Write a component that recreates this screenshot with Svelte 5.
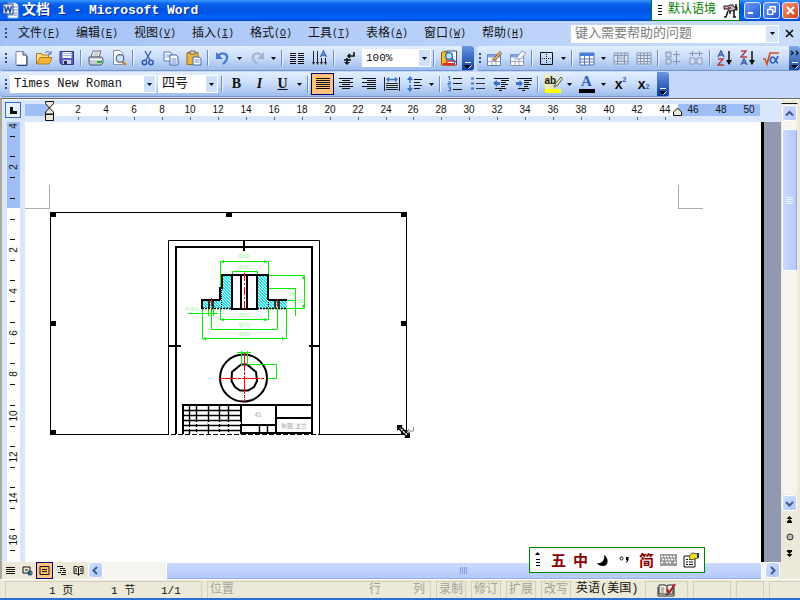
<script>
  const icons = {
    blank: '<path d="M3 1.500h7l3.500 3.500v10H3z" fill="#fff" stroke="#6f86ad"/><path d="M10 1.500V5h3.500M4 15.500h10V6" fill="none" stroke="#33415f"/>',
    open: '<path d="M.5 14V3.500h5l1 1.500h6V8" fill="#fbdc7d" stroke="#b07a1c"/><path d="M1 14 4 7.500h12L13 14z" fill="#f6b73c" stroke="#b07a1c"/><path d="M9 3c2-2 4-2 5 0m1-2v3h-3" fill="none" stroke="#3b62a8"/>',
    save: '<path d="M1 1.500h13.500v13H2.500L1 13z" fill="#5a63c4" stroke="#32397f"/><path d="M3.500 2h9v6h-9z" fill="#fff"/><path d="M4 3.500h8M4 5.500h8" stroke="#a6b2e4"/><path d="M4 10h8v4H4z" fill="#cfd3e8"/><path d="M5 11h3v3H5z" fill="#252d6d"/>',
    print: '<path d="M5 1h8l-2 6H3z" fill="#fff" stroke="#667"/><path d="M1 7h13l1 2v4l-2 2H2l-1-2z" fill="#c6cbd5" stroke="#555f72"/><path d="M2 9.500h12" stroke="#fff"/><path d="M9 11h5v2H9z" fill="#29b229"/><path d="M6 3h5M5 5h5" stroke="#9aa"/>',
    preview: '<path d="M2.500.5H9l3 3v11H2.500z" fill="#fff" stroke="#8090ad"/><circle cx="9" cy="8.500" r="3.800" fill="#c8e4f7" stroke="#546a89" stroke-width="1.300"/><path d="m11.500 11.500 3.500 3.500" stroke="#d1892f" stroke-width="2.500"/>',
    cut: '<path d="M5 1l5 9M11 1 6 10" stroke="#4a66a8" stroke-width="1.500"/><circle cx="4.500" cy="12.500" r="2.200" fill="none" stroke="#285bb5" stroke-width="1.500"/><circle cx="11" cy="12.500" r="2.200" fill="none" stroke="#285bb5" stroke-width="1.500"/>',
    copy: '<path d="M1 2h6l2 2v7H1z" fill="#fff" stroke="#5277bf"/><path d="M2.500 5h5M2.500 7h5" stroke="#7ea0dc"/><path d="M7 5h6l2 2v8H7z" fill="#fff" stroke="#3c62ad"/><path d="M8.500 9h5M8.500 11h5M8.500 13h5" stroke="#5c86ce"/>',
    paste: '<path d="M1 2.500h11v12H1z" fill="#eeb33b" stroke="#9c6a19"/><path d="M4 1h5v3H4z" fill="#ddd" stroke="#665"/><path d="M7 7h6l2 2v6H7z" fill="#fff" stroke="#4a66a0"/><path d="M8.500 10h5M8.500 12h5" stroke="#6c8cc8"/>',
    undo: '<path d="M3 6c4-5 10-2 9 2 0 3-2 4-4 6" fill="none" stroke="#4478cf" stroke-width="2.200"/><path d="M1 2v7h7z" fill="#4478cf"/>',
    redo: '<path d="M13 6C9 1 3 4 4 8c0 3 2 4 4 6" fill="none" stroke="#a2b3cf" stroke-width="2"/><path d="M15 2v7H8z" fill="#a2b3cf"/>',
    columns: '<path d="M1 3.500h6M1 5.500h6M1 7.500h6M1 9.500h6M1 11.500h6M1 13.500h6M9 3.500h6M9 5.500h6M9 7.500h6M9 9.500h6M9 11.500h6M9 13.500h6" stroke="#111"/>',
    direction: '<path d="M1.500 1v13M5.500 1v13M9.500 8v6M13.500 8v6" stroke="#222"/><path d="m8.500 7 3-6 3 6M9.500 5h4" fill="none" stroke="#3565b2" stroke-width="1.300"/><path d="m0 12 1.500 3L3 12m1 0 1.500 3L7 12m1 0 1.500 3 1.500-3m1 0 1.500 3 1.500-3" fill="#222"/>',
    marks: '<path d="M13 2v4H7m2-2L7 6l2 2M3 10h7M6 8v6" fill="none" stroke="#111" stroke-width="1.600"/><path d="m3 12 3 3 3-3z" fill="#111"/>',
    research: '<path d="M.5 2.500 5 1l1 1v13H.5z" fill="#f4c51e" stroke="#9d5309"/><path d="M6 1h9.500v14H6z" fill="#fff" stroke="#456"/><path d="M2 13h12v2.500H2z" fill="#e32a16"/><path d="M4 10h10l1 2H5z" fill="#f0543c"/><circle cx="8" cy="6" r="3.400" fill="#b9e7fb" stroke="#246bce" stroke-width="1.400"/><path d="m10.500 8.500 4 4" stroke="#246bce" stroke-width="2"/>',
    draw: '<path d="M.5 4.500h13v11H.5z" fill="#fff" stroke="#6b7ea5"/><path d="M1 6h12" stroke="#7ea2e0" stroke-width="3"/><path d="M5 8v7M9 8v7M1 11.500h12" stroke="#9aa9c5"/><path d="m7 10 7-8" stroke="#8e532a" stroke-width="3"/><path d="m7 10 7-8" stroke="#f0c173" stroke-width="1.300"/><path d="m6 11 1-2 1 1z" fill="#222"/>',
    erase: '<path d="M.5 4.500h13v11H.5z" fill="#fff" stroke="#8494b4"/><path d="M1 6h12" stroke="#7ea2e0" stroke-width="3"/><path d="M5 8v7M9 8v7M1 11.500h12" stroke="#9aa9c5"/><path d="m7 7 5-6 4 2-5 6H7z" fill="#f5f8ff" stroke="#8494b4"/>',
    border: '<path d="M1.500 2.500h12v12h-12z" fill="none" stroke="#111"/><path d="M7.500 4v10M3 8.500h10" stroke="#111" stroke-dasharray="1 1"/>',
    table: '<path d="M1 3h14v12H1z" fill="#fff" stroke="#5373ac"/><path d="M1 4.500h14" stroke="#477cda" stroke-width="3"/><path d="M5.500 6v9M10.500 6v9M1 9h14M1 12h14" stroke="#5373ac"/>',
    merge: '<path d="M1 3h14v11H1z" fill="#dbe4f2" stroke="#8797b4"/><path d="M1 5.500h14M1 11.500h14M4.500 3v11M8 3v3M11.500 3v11" stroke="#8797b4"/><path d="M5 6.500h6v4H5z" fill="#b8c5dc"/>',
    split: '<path d="M1 3h14v11H1z" fill="#dbe4f2" stroke="#8797b4"/><path d="M1 5.500h14M1 8.500h14M1 11.500h14M4.500 3v11M8 3v11M11.500 3v11" stroke="#8797b4"/>',
    rows: '<path d="M1 2h5v5H1zm0 7h5v5H1zM8 4.500h7M8 11.500h7M11.500 1v14" fill="#c8d4e9" stroke="#8295b9"/>',
    cols: '<path d="M2 8h5v6H2zm7 0h5v6H9zM1 3.500h14M4.500 1v5M11.500 1v5" fill="#d8e1f0" stroke="#8295b9"/>',
    az: '<path d="m1 7 3-6 3 6M2 5h4" fill="none" stroke="#3d5f9e" stroke-width="1.500"/><path d="M1 9h5l-5 6h6" fill="none" stroke="#b24242" stroke-width="1.500"/><path d="M12 1v13" stroke="#111" stroke-width="1.500"/><path d="m9 10 3 5 3-5z" fill="#111"/>',
    za: '<path d="M1 1h5L1 7h6" fill="none" stroke="#b24242" stroke-width="1.500"/><path d="m1 15 3-6 3 6m-5-2h4" fill="none" stroke="#3d5f9e" stroke-width="1.500"/><path d="M12 1v13" stroke="#111" stroke-width="1.500"/><path d="m9 10 3 5 3-5z" fill="#111"/>',
    root: '<path d="M0 9h2l2 5L7 3h9" fill="none" stroke="#d64b25" stroke-width="1.700"/><path d="M15 6c-2 5-3 7-5 7-4 0-3-6 0-6 2 0 3 6 5 6" fill="none" stroke="#285fc2" stroke-width="1.700"/>',
    justify: '<path d="M1 2.500h14M1 4.500h14M1 6.500h14M1 8.500h14M1 10.500h14M1 12.500h14" stroke="#111"/>',
    center: '<path d="M1 2.500h14M4 4.500h8M1 6.500h14M4 8.500h8M1 10.500h14M4 12.500h8" stroke="#111"/>',
    right: '<path d="M1 2.500h14M6 4.500h9M1 6.500h14M6 8.500h9M1 10.500h14M6 12.500h9" stroke="#111"/>',
    spread: '<path d="M.5 1v14M15.500 1v14M2 7.500h12M2 9.500h12M2 11.500h12M2 13.500h12" stroke="#222"/><path d="M3 3.500h10M5 1.500l-2 2 2 2m6-4 2 2-2 2" fill="none" stroke="#3e74c8" stroke-width="1.300"/>',
    spacing: '<path d="M7 3.500h8M7 6.500h6M7 9.500h8M7 12.500h6" stroke="#111"/><path d="M3 2v5M3 9v5" stroke="#3a6fc4" stroke-width="1.500"/><path d="m0 4 3-4 3 4zm0 8 3 4 3-4z" fill="#3a6fc4"/>',
    numbers: '<path d="M6 2.500h9M6 7.500h9M6 13.500h9" stroke="#111"/><path d="M2.500 0v4M1 1h1M1 6h2.500v1.500H1V9h3m-3 2h2.500v2H2m1.500 0v2H1" fill="none" stroke="#3a6fc4"/>',
    bullets: '<path d="M6 2.500h9M6 7.500h9M6 12.500h9" stroke="#333"/><path d="M1 1.500h3v2H1zm0 5h3v2H1zm0 5h3v2H1z" fill="#4778c4"/>',
    outdent: '<path d="M1 2.500h15M8 4.500h8M8 6.500h5M8 8.500h7M8 10.500h4M2 12.500h11M6 14.500h3" stroke="#111"/><path d="m0 7 4-3v2h3v3H4v2z" fill="#3a6fc4"/>',
    indent: '<path d="M1 2.500h15M8 4.500h8M8 6.500h5M8 8.500h7M8 10.500h4M2 12.500h11M6 14.500h3" stroke="#111"/><path d="M7 7.500 3.500 4v2H0v3h3.500v2z" fill="#3a6fc4"/>',
    moreTop: '<path d="m4 5 2 2-2 2m5-4 2 2-2 2" fill="none" stroke="#111" stroke-width="1.300"/>'
  };

  const btn = (id, label) => ({ kind: 'btn', id, label });
  const sep = { kind: 'sep' };
  const drop = (label) => ({ kind: 'drop', label });

  const standard = [
    btn('blank', '新建'), btn('open', '打开'), btn('save', '保存'), sep,
    btn('print', '打印'), btn('preview', '打印预览'), sep,
    btn('cut', '剪切'), btn('copy', '复制'), btn('paste', '粘贴'), sep,
    btn('undo', '撤消'), drop('撤消列表'), btn('redo', '恢复'), drop('恢复列表'), sep,
    btn('columns', '分栏'), btn('direction', '文字方向'), sep, btn('marks', '显示标记'),
    { kind: 'select', label: '显示比例', value: '100%', cls: 'zoom' }, sep, btn('research', '信息检索')
  ];
  const tables = [
    btn('draw', '绘制表格'), btn('erase', '擦除'), sep, btn('border', '边框'), drop('边框样式'), sep,
    btn('table', '插入表格'), drop('表格选项'), btn('merge', '合并单元格'), btn('split', '拆分单元格'), sep,
    btn('rows', '平均分布各行'), btn('cols', '平均分布各列'), sep,
    btn('az', '升序排序'), btn('za', '降序排序'), btn('root', '公式')
  ];
  const formatting = [
    { kind: 'select', label: '字体', value: 'Times New Roman', cls: 'font' },
    { kind: 'select', label: '字号', value: '四号', cls: 'size' }, sep,
    { kind: 'text', label: '加粗', text: 'B', cls: 'bold' },
    { kind: 'text', label: '倾斜', text: 'I', cls: 'italic' },
    { kind: 'text', label: '下划线', text: 'U', cls: 'under' }, drop('下划线样式'), sep,
    { kind: 'btn', id: 'justify', label: '两端对齐', active: true },
    btn('center', '居中'), btn('right', '右对齐'), btn('spread', '分散对齐'), btn('spacing', '行距'), drop('行距选项'), sep,
    btn('numbers', '编号'), btn('bullets', '项目符号'), btn('outdent', '减少缩进量'), btn('indent', '增加缩进量'), sep,
    { kind: 'text', label: '突出显示', text: 'ab', cls: 'mark' }, drop('突出显示颜色'),
    { kind: 'text', label: '字体颜色', text: 'A', cls: 'color' }, drop('字体颜色列表'),
    { kind: 'text', label: '上标', text: 'x', small: '2', cls: 'sup' },
    { kind: 'text', label: '下标', text: 'x', small: '2', cls: 'sub' }
  ];

  const menus = [
    ['文件', 'F'], ['编辑', 'E'], ['视图', 'V'], ['插入', 'I'], ['格式', 'O'],
    ['工具', 'T'], ['表格', 'A'], ['窗口', 'W'], ['帮助', 'H']
  ];

  const hMarks = Array.from({ length: 25 }, (_, i) => (i + 1) * 2);
  const vMarks = [-4, -2, 2, 4, 6, 8, 10, 12, 14, 16];
  const vPos = (n) => Math.round(86.500 + n * 20.700);
  const handles = [[50, 212], [226, 212], [401, 212], [50, 321], [401, 321], [50, 430], [401, 430]];

  const views = [
    ['普通视图', '<path d="M2 3.500h9M2 5.500h9M2 7.500h9M2 9.500h9" stroke="#111"/>'],
    ['Web 版式视图', '<path d="M2 3h7v6H2zM4 6h3" fill="none" stroke="#111"/><circle cx="9" cy="9" r="2.500" fill="#264f86"/><path d="M9 8h2v2H9z" fill="#3b9d47"/>'],
    ['页面视图', '<path d="M2 2.500h9v8H2zM4 5.500h5M4 7.500h5" fill="none" stroke="#111"/>'],
    ['大纲视图', '<path d="M2 2.500h6M5 4.500h5M5 6.500h2m1 0h3M3 8.500h3m1 0h4M6 10.500h5" stroke="#111"/>'],
    ['阅读版式', '<path d="M2 2.500h3l1.500 1L8 2.500h3v7H8l-1.500 2-1.500-2H2zM6.500 3v8M3 5h2M3 7h2M8 5h2M8 7h2" fill="none" stroke="#111"/>']
  ];
</script>

{#snippet icon(id)}
  <svg width="16" height="16" viewBox="0 0 16 16" aria-hidden="true">{@html icons[id]}</svg>
{/snippet}

{#snippet tri()}
  <svg width="5" height="3" viewBox="0 0 5 3" aria-hidden="true"><path d="M0 0h5L2.500 3z" fill="#000" /></svg>
{/snippet}

{#snippet bar(name, items, more = false)}
  <div class="toolbar" role="toolbar" aria-label={name}>
    <div class="inner">
      <span class="grip"></span>
      {#each items as it}
        {#if it.kind === 'sep'}
          <span class="sep"></span>
        {:else if it.kind === 'drop'}
          <button class="drop" aria-label={it.label}>{@render tri()}</button>
        {:else if it.kind === 'select'}
          <span class="combo {it.cls}">
            <select aria-label={it.label}><option>{it.value}</option></select>
            <span class="arrow">{@render tri()}</span>
          </span>
        {:else if it.kind === 'text'}
          <button class="tool {it.cls}" aria-label={it.label}>
            <span>{it.text}</span>{#if it.small}<small>{it.small}</small>{/if}
            {#if it.cls === 'mark'}
              <svg class="pen" width="10" height="12" viewBox="0 0 10 12" aria-hidden="true"><path d="m1 11 2-4 5-6 1.500 1.500L5 9z" fill="#f5ef9f" stroke="#555" /></svg>
            {/if}
          </button>
        {:else}
          <button class="tool" class:active={it.active} aria-label={it.label}>{@render icon(it.id)}</button>
        {/if}
      {/each}
    </div>
    <button class="cap" aria-label="工具栏选项">
      {#if more}{@render icon('moreTop')}{/if}
      <svg width="8" height="7" viewBox="0 0 8 7" aria-hidden="true"><path d="M1 .5h6" stroke="#fff" /><path d="M0 3h7L3.500 6.500z" fill="#000" /><path d="m4.500 6.500 3-3" stroke="#fff" /></svg>
    </button>
  </div>
{/snippet}

<div class="app">
  <header class="title">
    <svg width="17" height="17" viewBox="0 0 17 17" aria-hidden="true">
      <path d="M6 1h8l2 2v13H6z" fill="#fff" stroke="#9db4dc" /><path d="M8 5h7M8 8h7M8 11h7M5 13h10" stroke="#6d87b7" />
      <path d="M1 2h10v10H1z" fill="#e8effc" stroke="#24458c" /><path d="m2.500 4 1.500 6 2-5 2 5 1.500-6" fill="none" stroke="#234a9c" stroke-width="1.500" />
    </svg>
    <h1><span>文档</span> 1 - Microsoft Word</h1>
    <div class="lang">
      <svg width="5" height="12" viewBox="0 0 5 12" aria-hidden="true"><path d="M0 1.500h4M0 4.500h4M0 7.500h4M0 10.500h4" stroke="#111" /></svg>
      <span>默认语境</span>
      <svg width="15" height="15" viewBox="0 0 15 15" aria-hidden="true"><path d="M1 3h4l2-1h3l1 2h3v3h-3L9 8H6L5 6H1z" fill="#bbb" stroke="#111" /><path d="M5 8 3 14M7 8v3m4-4v7m-1 0h3M3 14H1M13 1v6" stroke="#111" stroke-width="1.500" fill="none" /><path d="M5 4h3v2H5z" fill="#b03028" /></svg>
    </div>
    <div class="wins">
      <button class="win" aria-label="最小化"><svg width="9" height="9" viewBox="0 0 9 9"><path d="M0 7h5" stroke="#fff" stroke-width="2" /></svg></button>
      <button class="win" aria-label="还原"><svg width="9" height="9" viewBox="0 0 9 9"><path d="M3 3V.8h5.200v5H6M.7 3.500h5v5h-5z" fill="none" stroke="#fff" stroke-width="1.400" /></svg></button>
      <button class="win close" aria-label="关闭"><svg width="9" height="9" viewBox="0 0 9 9"><path d="m1 1 7 7m0-7-7 7" stroke="#fff" stroke-width="2" /></svg></button>
    </div>
  </header>

  <nav class="menubar">
    <span class="grip"></span>
    {#each menus as [name, key]}
      <button class="menu">{name}<span class="key">(<u>{key}</u>)</span></button>
    {/each}
    <div class="ask">
      <input aria-label="键入需要帮助的问题" placeholder="键入需要帮助的问题" />
      <button class="arrow" aria-label="帮助列表">{@render tri()}</button>
    </div>
    <button class="shut" aria-label="关闭文档"><svg width="9" height="9" viewBox="0 0 9 9"><path d="m1 1 7 7m0-7-7 7" stroke="#111" stroke-width="1.700" /></svg></button>
  </nav>

  <div class="bars">
    {@render bar('常用', standard)}
    <div class="stretch">{@render bar('表格和边框', tables, true)}</div>
  </div>
  <div class="bars">{@render bar('格式', formatting)}</div>

  <main>
    <div class="left">
      <div class="hruler">
        <button class="corner" aria-label="制表符"><svg width="7" height="7" viewBox="0 0 7 7"><path d="M1.500 0v5.500H7" fill="none" stroke="#111" stroke-width="3" /></svg></button>
        <svg class="scale" height="23" aria-hidden="true">
          <rect y="5" width="24" height="12" fill="#9ebef5" />
          <rect x="24" y="5" width="629" height="12" fill="#fff" />
          <rect x="653" y="5" width="82" height="12" fill="#9ebef5" />
          {#each hMarks as n}
            <text x={25 + Math.round(n * 13.980)} y="14" text-anchor="middle">{n}</text>
            {#if n < 45}<path d="M{25.500 + Math.round(n * 13.980)} 18v3" stroke="#667" />{/if}
          {/each}
          <path d="M20.500 2.500h8v2l-4 4.500 4 4v2h-8v-2l4-4-4-4.500zM20.500 15.500h8v6h-8z" fill="#ece9d8" stroke="#111" />
          <path d="m652.500 9 4 4v3.500h-8V13z" fill="#ece9d8" stroke="#111" />
        </svg>
      </div>
      <div class="work">
        <div class="vruler">
          <svg width="13" height="440" aria-hidden="true">
            <rect width="13" height="86" fill="#9ebef5" />
            {#each vMarks as n}
              <text transform="translate(10 {vPos(n)}) rotate(-90)" text-anchor="middle">{Math.abs(n)}</text>
              <path d="M3 {vPos(n) - 10.500}h5M3 {vPos(n) + 10.500}h5" stroke="#111" />
            {/each}
            <path d="M3 76.500h5M3 97.500h5" stroke="#111" />
          </svg>
        </div>
        <article class="page">
          <div class="crops"><span class="crop tl"></span><span class="crop tr"></span></div>
          <svg class="object" width="366" height="227" viewBox="50 212 366 227" role="img" aria-label="法兰零件图">
            <defs>
              <pattern id="hatch" width="3" height="3" patternUnits="userSpaceOnUse">
                <rect width="3" height="3" fill="#21e3ee" /><path d="M0 0h1v1H0zM1 1h1v1H1zM2 2h1v1H2z" fill="#f2ffff" />
              </pattern>
            </defs>
            <rect x="50.500" y="212.500" width="356" height="222" fill="#fff" stroke="#000" />
            {#each handles as [x, y]}<rect {x} {y} width="6" height="5" />{/each}
            <g fill="none" stroke="#000">
              <path d="M168.500 434V240.500h151V434" />
              <path d="M169 434.500h150" stroke="#fff" stroke-dasharray="2 5" />
              <path d="M176 434V247h136v187M244 241v10M169 346h12M309 346h11" stroke-width="2" />
            </g>
            <path d="M222 275h10v34h-12v-1h-18v-8h18v-12h2zM257 275h11v25h19v8h-19v1h-11z" fill="url(#hatch)" />
            <g fill="none" stroke="#00f000">
              <path d="M220.500 288v-26.500h48V275M232.500 275v-3.500h25v3.500M268 275.500h36.500v33H268M268 288.500h28M295.500 288v28M287 300.500h9M220.500 309v10.500h48V309M211.500 310v19.500h66V309M202.500 309v29.500h84V309M188 313.500h30M208.500 306v10M213.500 306v10" />
            </g>
            <g fill="#00f000"><path d="m220 262 4-2v3zm48 0-4-2v3zm36 13-2 4h3zm0 34-2-4h3zM220 320l4-2v3zm48 0-4-2v3zm-66 19 4-2v3zm84 0-4-2v3z" /></g>
            <g fill="none" stroke="#000" stroke-width="2">
              <path d="M220 300v-12h2v-13h46v25M232 275v34h25v-34M241 275v34M247 275v34M220 300h-18v9M268 300h19" />
              <path d="M202 308.500h30M257 308.500h30" stroke-width="1.500" stroke-dasharray="2 1" />
              <path d="M209 300v8M213 300v8M275 300v8M279 300v8" stroke-width="1.500" />
              <path d="M221.500 276v32M268.500 276v32M231.500 276v32M257.500 276v32" stroke-width="1" stroke-dasharray="1 1" />
            </g>
            <path d="M244.500 273v36M211.500 298v12M277.500 299v10" stroke="#f00" stroke-dasharray="8 2 2 2" />
            <g class="dims">
              <text x="244" y="258">Φ50</text><text x="244" y="269">Φ30</text><text x="244" y="317">Φ50</text>
              <text x="244" y="327">Φ70</text><text x="244" y="336">Φ90</text><text x="192" y="311">4-Φ6</text>
              <text x="292" y="296">26</text><text x="301" y="303">35</text>
            </g>
            <circle cx="243.500" cy="378" r="23.500" fill="none" stroke="#000" stroke-width="2" />
            <path d="M241 364.500h6l9 7.500 1 9-3 6-6 3.500h-8l-5-3.500-3.500-6 .5-9z" fill="none" stroke="#000" stroke-width="2" />
            <path d="M237 352.500h14M241.500 351v15M247.500 351v14M248 364.500h28.500v14H268" fill="none" stroke="#00f000" />
            <path d="M219 378.500h46M244.500 353v49" stroke="#f00" stroke-dasharray="18 1 3 1" />
            <g fill="none" stroke="#000">
              <path d="M183 434v-29h129M241 405v28h71M276 405v28M276 418h36M241 425h35" stroke-width="2" />
              <path d="M183 410.500h58M183 415.500h58M183 420.500h58M183 425.500h58M183 430.500h58M189.500 405v29M196.500 405v29M208.500 405v29M219.500 405v29M228.500 405v29M259.500 425v8M267.500 425v8" stroke-width="1.400" />
              <path d="M185 423h56M187 428h54M193 433h47" stroke="#fff" stroke-width="2" stroke-dasharray="4 3 7 2" />
            </g>
            <g class="plate"><text x="258" y="417">45</text><text x="294" y="428">制图 法兰</text></g>
            <path d="M413.500 427v4H407m2-2-2 2 2 2" fill="none" stroke="#888" />
            <path d="m399 427 9 9" stroke="#000" stroke-width="4" /><path d="m399 427 9 9" stroke="#fff" stroke-width="1.500" stroke-dasharray="2 1" />
            <path d="M397 425h6l-6 6zM410 438h-6l6-6z" />
          </svg>
        </article>
        <div class="edge"></div>
      </div>
      <div class="bottom">
        <div class="views">
          {#each views as [label, d], i}
            <button class="view" class:active={i === 2} aria-label={label}><svg width="13" height="13" viewBox="0 0 13 13">{@html d}</svg></button>
          {/each}
        </div>
        <button class="sb" aria-label="向左滚动"><svg width="9" height="9" viewBox="0 0 9 9"><path d="M6 1 2.500 4.500 6 8" /></svg></button>
        <div class="htrack"><div class="hthumb"><svg width="8" height="8" viewBox="0 0 8 8"><path d="M.5 0v7M2.500 0v7M4.500 0v7M6.500 0v7" stroke="#7f9be8" /></svg></div></div>
        <button class="sb" aria-label="向右滚动"><svg width="9" height="9" viewBox="0 0 9 9"><path d="M3 1l3.500 3.500L3 8" /></svg></button>
      </div>
    </div>
    <div class="vbar">
      <span class="splitter"></span>
      <button class="sb" aria-label="向上滚动"><svg width="9" height="9" viewBox="0 0 9 9"><path d="m1 6.500 3.500-3.500L8 6.500" /></svg></button>
      <div class="vtrack"><div class="vthumb"><svg width="8" height="8" viewBox="0 0 8 8"><path d="M0 1.500h7M0 3.500h7M0 5.500h7M0 7.500h7" stroke="#edf3ff" /></svg></div></div>
      <button class="sb" aria-label="向下滚动"><svg width="9" height="9" viewBox="0 0 9 9"><path d="M1 3l3.500 3.500L8 3" /></svg></button>
      <button class="jump" aria-label="前一页"><svg width="7" height="7" viewBox="0 0 7 7"><path d="m3.500 0 3 3h-6zm0 3 3 3h-6zM1 6h5v1H1z" /></svg></button>
      <button class="jump" aria-label="选择浏览对象"><svg width="8" height="8" viewBox="0 0 8 8"><circle cx="4" cy="4" r="3" fill="#bbb" stroke="#333" /></svg></button>
      <button class="jump" aria-label="下一页"><svg width="7" height="7" viewBox="0 0 7 7"><path d="M1 0h5v1H1zM.5 1h6l-3 3zm0 3h6l-3 3z" /></svg></button>
    </div>
  </main>

  <footer>
    <div class="cell pages"><span>1 页</span><span>1 节</span><span>1/1</span></div>
    <div class="cell place"><span>位置</span><span class="row">行</span><span>列</span></div>
    <div class="cell mode">录制</div><div class="cell mode">修订</div><div class="cell mode">扩展</div><div class="cell mode">改写</div>
    <div class="locale">英语<span>(</span>美国<span>)</span></div>
    <div class="cell book">
      <svg width="20" height="14" viewBox="0 0 20 14" aria-hidden="true"><path d="M2 2h6l2 1 1-1h5v9h-5l-1 1-2-1H2zM10 3v9M1 4v9h16V4" fill="#fff" stroke="#222" /><path d="M4 5h3M4 7h3M4 9h3" stroke="#888" /><path d="m10 6 2 4 6-9" fill="none" stroke="#a81e1e" stroke-width="2" /></svg>
    </div>
    <div class="cell spare"></div><div class="cell slim"></div><div class="cell rest"></div>
  </footer>

  <div class="ime" role="toolbar" aria-label="输入法">
    <svg class="mover" width="5" height="16" viewBox="0 0 5 16" aria-hidden="true"><path d="M0 3h5L2.500 0zM1 7h4v1H1zm0 3h4v1H1zm0 3h4v1H1z" /></svg>
    <button class="kai">五</button>
    <button class="kai">中</button>
    <button aria-label="半角"><svg width="13" height="13" viewBox="0 0 13 13"><path d="M8 1c5 3 5 11-1 11-3 0-5-1-6-3 5 1 8-3 7-8z" /></svg></button>
    <button aria-label="中文标点"><svg width="11" height="11" viewBox="0 0 11 11"><circle cx="2.500" cy="3.500" r="1.500" fill="none" stroke="#111" /><path d="M7 2h2.500v3L8 7.500H7L8 5H7z" /></svg></button>
    <button class="jian">简</button>
    <button aria-label="软键盘"><svg width="17" height="12" viewBox="0 0 17 12"><path d="M0 0h17v12H0z" fill="#999" /><path d="M1 2.500h15M2 5.500h13M1 8.500h3m2 0h6m2 0h2" stroke="#fff" stroke-width="1.500" stroke-dasharray="2 1" /></svg></button>
    <button aria-label="属性"><svg width="16" height="16" viewBox="0 0 16 16"><path d="M1 4h11v11H1z" fill="#fff" stroke="#111" /><path d="M3 7.500h2m1 0h4M3 10h2m1 0h4M3 12.500h2m1 0h4" stroke="#111" /><path d="m6 5 3-4 6 1v4l-4 1-3 1z" fill="#f0e21d" stroke="#665f10" /><path d="M14 1h2v5h-2z" fill="#1b2f95" /></svg></button>
  </div>
</div>

<style>
  :global(body) { margin: 0; }
  .app {
    position: relative; display: flex; flex-direction: column; height: 100vh; min-height: 400px; overflow: hidden;
    box-sizing: border-box; border-bottom: 2px solid #2a6fd2; background: #c3d8fa; color: #111;
    font: 12px/16px "Liberation Mono", "Noto Sans CJK SC", monospace;
  }
  button, input, select { font: inherit; color: inherit; border: 0; padding: 0; margin: 0; background: none; border-radius: 0; }
  button { display: flex; align-items: center; justify-content: center; flex: none; }
  svg { display: block; flex: none; }

  .title { display: flex; align-items: center; height: 21px; flex: none; padding-left: 2px; background: linear-gradient(#3a95ff 0, #0a62ee 4px, #0052e0 10px, #0062fb 18px, #0045c4); }
  h1 { margin: 0 auto 0 3px; font-size: 13px; line-height: 20px; font-weight: bold; color: #fff; white-space: pre; text-shadow: 1px 1px #0a2f8a; }
  h1 span { font-size: 14px; }
  .lang { display: flex; align-items: center; gap: 5px; box-sizing: border-box; width: 89px; height: 21px; padding-left: 6px; border: 1px solid #008000; border-top: 0; background: #fff; color: #008000; font-size: 12px; }
  .lang span { width: 50px; line-height: 18px; white-space: nowrap; }
  .wins { display: flex; gap: 2px; padding: 0 1px 0 4px; }
  .win { width: 17px; height: 17px; border: 1px solid #dce8ff; border-radius: 3px; background: linear-gradient(135deg, #6d9cf5, #2058d8); }
  .win.close { background: linear-gradient(135deg, #f09a7c, #d23f16); }

  .menubar { display: flex; align-items: center; height: 25px; flex: none; background: linear-gradient(90deg, #a4c2f6, #c8dcfb); }
  .grip { width: 9px; height: 13px; flex: none; background: radial-gradient(circle at 6px 2px, #2c4a8c 1px, transparent 1.500px) 0 0 / 9px 4px; }
  .menu { width: 58px; padding-left: 9px; justify-content: flex-start; }
  .menu .key { font-size: 10px; }
  .ask { display: flex; margin-left: auto; width: 208px; height: 18px; background: #fff; }
  .ask input { flex: 1; min-width: 0; padding-left: 4px; font-size: 13px; outline: 0; }
  .ask input::placeholder { color: #7b7b7b; opacity: 1; }
  .ask .arrow { width: 14px; background: #d6e5fb; border: 1px solid #fff; }
  .shut { width: 21px; }

  .bars { display: flex; height: 26px; gap: 3px; flex: none; }
  .stretch { display: flex; flex: 1; min-width: 0; }
  .stretch > .toolbar { flex: 1; }
  .toolbar { display: flex; height: 25px; min-width: 0; border-bottom: 1px solid #7794cc; box-sizing: border-box; border-radius: 3px; overflow: hidden; background: linear-gradient(#e2eefe, #c9dcf9 50%, #9dbbec); }
  .inner { display: flex; align-items: center; padding-right: 2px; flex: 1; min-width: 0; }
  .stretch .grip { width: 6px; background-position-x: -3px; }
  .tool { width: 23px; height: 22px; box-sizing: border-box; position: relative; }
  .tool.active, .view.active { background: #ffc27a; border: 1px solid #000080; }
  .drop { width: 11px; height: 20px; }
  .sep { width: 6px; height: 16px; flex: none; background: linear-gradient(90deg, transparent 2px, #6a8ccb 2px, #6a8ccb 3px, #f0f6ff 3px, #f0f6ff 4px, transparent 4px); }
  .cap { width: 12px; flex-direction: column; justify-content: flex-end; padding-bottom: 1px; box-sizing: border-box; background: linear-gradient(#6a95e0, #0b3e9f); }
  .stretch .cap { width: 11px; background: linear-gradient(#82a8e8, #1a4aa6); }
  .combo { display: grid; height: 18px; flex: none; background: #fff; margin-right: 2px; }
  .combo select { grid-area: 1 / 1; appearance: none; width: 100%; height: 18px; padding-left: 4px; outline: 0; }
  .combo .arrow { grid-area: 1 / 1; justify-self: end; width: 11px; height: 16px; margin: 1px; display: flex; align-items: center; justify-content: center; background: #cfe0fa; pointer-events: none; }
  .combo.zoom { width: 69px; margin: 0 0 0 2px; font-size: 11px; }
  .combo.font { width: 146px; margin-left: 1px; }
  .combo.size { width: 60px; margin-right: 1px; font-size: 13px; }
  .bold, .italic, .under { font-family: "Liberation Serif", serif; font-weight: bold; font-size: 14px; }
  .italic { font-style: italic; }
  .under { text-decoration: underline; }
  .mark { font: bold 10px/12px "Liberation Sans", sans-serif; }
  .mark span { width: 16px; height: 12px; padding-bottom: 2px; border-bottom: 4px solid #ff0; background: linear-gradient(90deg, #f6f1a0, transparent); text-align: left; }
  .mark .pen { position: absolute; right: 1px; top: 3px; }
  .color { font: bold 15px/13px "Liberation Serif", serif; color: #3561b5; }
  .color span { width: 16px; height: 14px; border-bottom: 4px solid #000; }
  .sup, .sub { font: bold 14px/14px "Liberation Sans", sans-serif; }
  .sup small, .sub small { font-size: 7px; line-height: 8px; color: #2d5cb8; align-self: flex-start; padding-top: 3px; }
  .sub small { align-self: flex-end; padding: 0 0 4px; }

  main { display: flex; flex: 1; min-height: 0; border-top: 1px solid #6d6a5c; border-left: 2px solid #aca899; background: #ece9d8; }
  .left { display: flex; flex-direction: column; flex: 1; min-width: 0; }
  .hruler { display: flex; height: 23px; flex: none; background: #d8e7fc; border-top: 1px solid #fff; box-sizing: border-box; }
  .corner { width: 16px; height: 16px; margin: 2px 4px 0 3px; box-sizing: border-box; border: 1px solid #3b6bc4; background: #e6effd; }
  .scale { flex: 1; min-width: 0; margin-top: -1px; }
  .scale text, .vruler text { font: 10px "Liberation Sans", sans-serif; fill: #111; }
  .work { display: flex; flex: 1; min-height: 0; overflow: hidden; background: #fff; }
  .vruler { width: 13px; flex: none; border: solid #d8e7fc; border-width: 0 5px; background: #fff; overflow: hidden; }
  .page { flex: 1; min-width: 0; padding-top: 63px; border-right: 3px solid #000; }
  .crops { display: flex; justify-content: space-between; padding-right: 58px; }
  .crop { width: 25px; height: 24px; box-sizing: border-box; border-bottom: 1px solid #aaa; }
  .tl { border-right: 1px solid #aaa; }
  .tr { border-left: 1px solid #aaa; }
  .object { margin: 3px 0 0 25px; }
  .dims text { font: 6px "Liberation Sans", sans-serif; fill: #a4f5a4; text-anchor: middle; }
  .plate text { font: 6px "Noto Sans CJK SC", sans-serif; fill: #aaa; text-anchor: middle; }
  .edge { width: 17px; flex: none; background: #9199b0; }

  .bottom { display: flex; height: 17px; flex: none; padding-right: 1px; background: #ece9d8; }
  .views { display: flex; width: 86px; flex: none; }
  .view { width: 17px; height: 17px; box-sizing: border-box; }
  .sb { width: 15px; height: 16px; box-sizing: border-box; border: 1px solid #fff; border-radius: 3px; background: linear-gradient(135deg, #d3e0ff, #aec5fa); }
  .sb path { fill: none; stroke: #41598e; stroke-width: 2; }
  .htrack { flex: 1; min-width: 0; display: flex; padding: 0 3px 0 63px; background: #f5f4ee; }
  .hthumb { flex: 1; display: flex; align-items: center; justify-content: center; border: 1px solid #fff; border-bottom-color: #93aee8; border-radius: 2px; background: linear-gradient(#cbdafe, #b4c9fb); }
  .vbar { display: flex; flex-direction: column; align-items: center; width: 17px; flex: none; padding: 0 2px 17px 0; }
  .splitter { width: 17px; height: 5px; flex: none; box-sizing: border-box; border: 1px solid #fff; border-bottom: 1px solid #111; background: #ece9d8; }
  .vbar .sb { margin-top: 1px; }
  .vtrack { flex: 1; width: 15px; min-height: 0; padding-top: 8px; background: #f5f4ee; }
  .vthumb { height: 39%; display: flex; align-items: center; justify-content: center; box-sizing: border-box; border: 1px solid #fff; border-right-color: #93aee8; border-radius: 2px; background: linear-gradient(90deg, #cbdafe, #b4c9fb); }
  .jump { width: 15px; height: 17px; }

  footer { display: flex; align-items: center; height: 19px; flex: none; gap: 5px; padding-left: 5px; border-top: 1px solid #fff; box-sizing: border-box; background: #ece9d8; font-size: 12px; line-height: 18px; }
  .cell { display: flex; align-items: center; height: 17px; box-sizing: border-box; flex: none; border: 1px solid #d2cfbf; border-bottom: 0; white-space: nowrap; }
  .pages { display: grid; grid-template-columns: 62px 50px 26px; width: 197px; padding-left: 43px; font-size: 11px; }
  .place { flex: 1; min-width: 120px; padding: 0 5px 0 2px; color: #a5a293; gap: 32px; }
  .row { margin-left: auto; }
  .mode { width: 30px; padding-left: 2px; color: #a5a293; }
  .locale { width: 64px; white-space: nowrap; display: flex; }
  .book { width: 43px; justify-content: center; }
  .spare { width: 38px; }
  .slim { width: 28px; }
  .rest { width: 31px; border-right: 0; }

  .ime { position: absolute; right: 95px; bottom: 25px; display: flex; align-items: center; gap: 5px; width: 176px; height: 26px; padding-left: 5px; box-sizing: border-box; border: 1px solid #008000; background: #fff; }
  .ime .mover { margin-right: 5px; }
  .ime button { width: 17px; height: 20px; }
  .ime .kai { font: bold 15px/18px "Noto Sans CJK SC", sans-serif; color: #8c0000; }
  .ime .jian { font: bold 15px/18px "Noto Sans CJK SC", sans-serif; color: #8c0000; }
</style>
